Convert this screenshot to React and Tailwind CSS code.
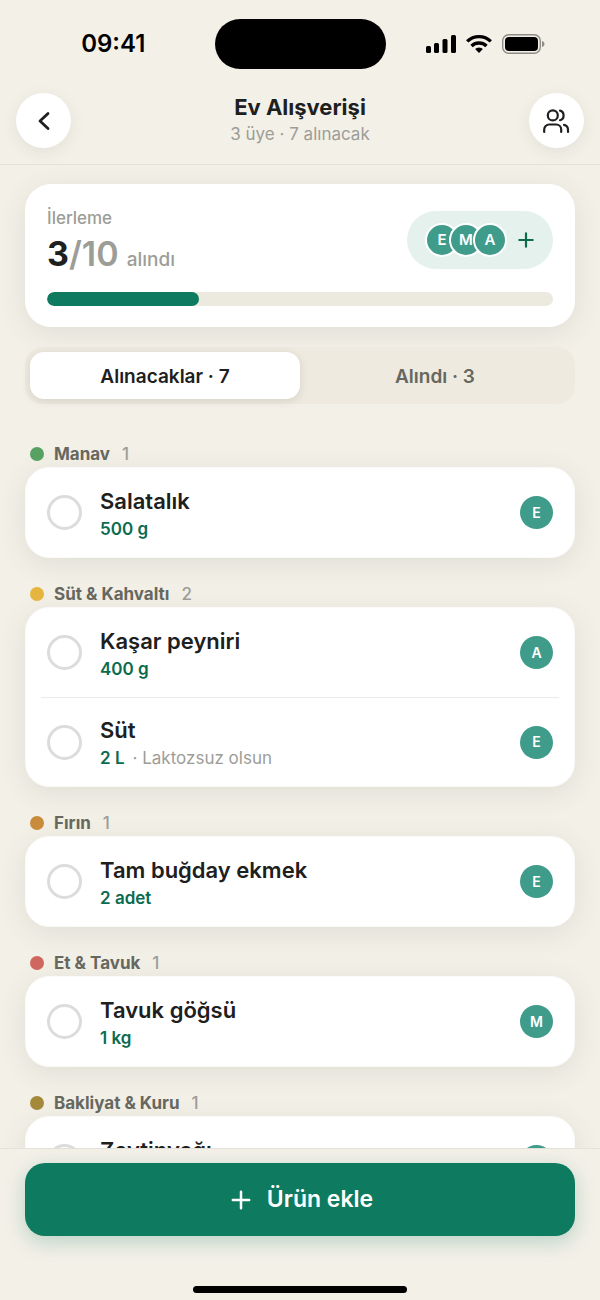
import React, { useState } from 'react';
import { clsx } from 'clsx';

const MEMBERS = ['E', 'M', 'A'];

const TOTAL = 10;
const DONE = 3;

const SECTIONS = [
  {
    name: 'Manav',
    dot: 'bg-[#57a163]',
    items: [{ id: 'salatalik', name: 'Salatalık', qty: '500 g', by: 'E' }],
  },
  {
    name: 'Süt & Kahvaltı',
    dot: 'bg-[#e5b53f]',
    items: [
      { id: 'kasar', name: 'Kaşar peyniri', qty: '400 g', by: 'A' },
      { id: 'sut', name: 'Süt', qty: '2 L', note: 'Laktozsuz olsun', by: 'E' },
    ],
  },
  {
    name: 'Fırın',
    dot: 'bg-[#c98b3c]',
    items: [{ id: 'ekmek', name: 'Tam buğday ekmek', qty: '2 adet', by: 'E' }],
  },
  {
    name: 'Et & Tavuk',
    dot: 'bg-[#d0675f]',
    items: [{ id: 'tavuk', name: 'Tavuk göğsü', qty: '1 kg', by: 'M' }],
  },
  {
    name: 'Bakliyat & Kuru',
    dot: 'bg-[#a5893b]',
    items: [{ id: 'zeytinyagi', name: 'Zeytinyağı', qty: '1 L', by: 'E' }],
  },
];

function StatusBar() {
  return (
    <div className="grid h-[88px] shrink-0 grid-cols-[1fr_171px_1fr] items-center text-black">
      <div className="pl-3 text-center text-2xl font-semibold">09:41</div>
      <div className="h-[50px] rounded-full bg-black" />
      <div className="flex items-center justify-center gap-[10px] pr-[14px]">
        <svg width="30" height="20" viewBox="0 0 30 20" fill="currentColor" aria-hidden="true">
          <rect x="0" y="12" width="5" height="7" rx="1.5" />
          <rect x="8" y="9" width="5" height="10" rx="1.5" />
          <rect x="16.500" y="5" width="5" height="14" rx="1.5" />
          <rect x="25" y="1" width="5" height="18" rx="1.5" />
        </svg>
        <svg width="26" height="20" viewBox="0 0 26 20" fill="none" stroke="currentColor" aria-hidden="true">
          <path d="M1.200 7.400a17 17 0 0 1 23.600 0" strokeWidth="3.400" />
          <path d="M5.500 12a11 11 0 0 1 15 0" strokeWidth="3.400" />
          <path d="M13 19l-3.900-3.900a5.600 5.600 0 0 1 7.800 0z" fill="currentColor" stroke="none" />
        </svg>
        <svg width="43" height="20" viewBox="0 0 43 20" aria-hidden="true">
          <rect x="0.700" y="0.700" width="37.600" height="18.600" rx="6" fill="none" stroke="#8d8c87" strokeWidth="1.400" />
          <rect x="3" y="3" width="33" height="14" rx="4" fill="currentColor" />
          <path d="M40 7c1.600.4 2.500 1.600 2.500 3s-.9 2.600-2.500 3z" fill="#8d8c87" />
        </svg>
      </div>
    </div>
  );
}

function RoundButton({ label, children }) {
  return (
    <button
      aria-label={label}
      className="flex size-[55px] items-center justify-center rounded-full bg-white text-[#1d201d] shadow-[0_4px_16px_rgba(40,50,40,0.08)]"
    >
      {children}
    </button>
  );
}

function Header() {
  return (
    <header className="flex shrink-0 items-center justify-between border-b border-[#e3e1da] px-4 pt-[5px] pb-4">
      <RoundButton label="Geri">
        <svg width="28" height="28" viewBox="0 0 28 28" fill="none" stroke="currentColor" strokeWidth="2.800" strokeLinecap="round" strokeLinejoin="round">
          <path d="M18 6.500l-8 7.500 8 7.500" />
        </svg>
      </RoundButton>
      <div className="text-center">
        <h1 className="text-[22px] leading-[26px] font-bold text-[#1d201d]">Ev Alışverişi</h1>
        <p className="text-[17px] leading-7 text-[#9c9d97]">3 üye · 7 alınacak</p>
      </div>
      <RoundButton label="Üyeler">
        <svg width="28" height="28" viewBox="0 0 28 28" fill="none" stroke="currentColor" strokeWidth="2.200" strokeLinecap="round" strokeLinejoin="round">
          <circle cx="10.800" cy="8.400" r="5" />
          <path d="M2.200 25v-2.500a5 5 0 0 1 5-5h7a5 5 0 0 1 5 5V25" />
          <path d="M18 3.600a5 5 0 0 1 0 9.600" />
          <path d="M22 17.900a5 5 0 0 1 4 4.800V25" />
        </svg>
      </RoundButton>
    </header>
  );
}

function ProgressCard() {
  return (
    <section className="rounded-[26px] bg-white px-[22px] pt-5 pb-[21px] shadow-[0_6px_28px_rgba(60,65,50,0.1)]">
      <div className="flex items-center justify-between">
        <div>
          <div className="text-[17px] leading-7 font-medium text-[#9c9d97]">İlerleme</div>
          <div className="flex items-baseline leading-[44px] text-[#9c9d97]">
            <span className="text-[34px] font-bold text-[#1d201d]">{DONE}</span>
            <span className="text-[34px] font-semibold">/{TOTAL}</span>
            <span className="ml-2 text-[19px] leading-7 font-medium">alındı</span>
          </div>
        </div>
        <button
          aria-label="Üye ekle"
          className="flex h-[58px] items-center rounded-full bg-[#e5f1ec] pr-4 pl-[18px] text-[#0b6b4f]"
        >
          <span className="flex -space-x-2.5">
            {MEMBERS.map((m) => (
              <span
                key={m}
                className="flex size-[34px] items-center justify-center rounded-full border-2 border-white bg-[#3f9c8b] text-[15px] font-semibold text-white"
              >
                {m}
              </span>
            ))}
          </span>
          <svg className="ml-2" width="22" height="22" viewBox="0 0 22 22" fill="none" stroke="currentColor" strokeWidth="2.200" strokeLinecap="round">
            <path d="M11 4.300v13.400M4.300 11h13.400" />
          </svg>
        </button>
      </div>
      <div className="mt-4 h-[14px] overflow-hidden rounded-full bg-[#ece9df]">
        <div className="h-full rounded-full bg-[#0e7a5f]" style={{ width: `${(DONE / TOTAL) * 100}%` }} />
      </div>
    </section>
  );
}

function Tabs({ value, onChange }) {
  const tabs = [
    { id: 'todo', label: 'Alınacaklar · 7' },
    { id: 'done', label: 'Alındı · 3' },
  ];

  return (
    <div role="tablist" className="mt-5 grid grid-cols-2 rounded-[18px] bg-[#eeeadf] p-[5px]">
      {tabs.map((t) => (
        <button
          key={t.id}
          role="tab"
          aria-selected={value === t.id}
          onClick={() => onChange(t.id)}
          className={clsx(
            'h-[47px] rounded-[14px] pt-1 text-[19px] font-semibold',
            value === t.id
              ? 'bg-white text-[#1d201d] shadow-[0_2px_8px_rgba(60,65,50,0.14)]'
              : 'text-[#66675e]'
          )}
        >
          {t.label}
        </button>
      ))}
    </div>
  );
}

function Item({ item, checked, onToggle }) {
  return (
    <li className="mx-[15px] flex h-[89px] items-center border-[#ebebe9] px-[6px] not-first:border-t">
      <input
        id={item.id}
        type="checkbox"
        checked={checked}
        onChange={onToggle}
        className="size-[35px] shrink-0 appearance-none rounded-full border-[3px] border-[#dcdcdc] checked:border-[#0e7a5f] checked:bg-[#0e7a5f]"
      />
      <div className="ml-[18px] min-w-0 flex-1 pt-0.5">
        <label htmlFor={item.id} className="block text-[22px] leading-[30px] font-semibold text-[#1d201d]">
          {item.name}
        </label>
        <div className="text-[17px] leading-[26px] text-[#9c9d97]">
          <span className="font-semibold text-[#0b6b4f]">{item.qty}</span>
          {item.note && <span className="ml-2">· {item.note}</span>}
        </div>
      </div>
      <span className="flex size-[33px] items-center justify-center rounded-full bg-[#3f9c8b] text-sm font-semibold text-white">
        {item.by}
      </span>
    </li>
  );
}

export default function App() {
  const [tab, setTab] = useState('todo');
  const [checked, setChecked] = useState({});

  const toggle = (id) => setChecked((prev) => ({ ...prev, [id]: !prev[id] }));

  return (
    <div className="flex h-screen flex-col bg-[#f3f0e8] font-['Inter','Liberation_Sans',sans-serif]">
      <StatusBar />
      <Header />

      <main className="min-h-0 flex-1 overflow-y-auto px-[25px] pt-[19px] pb-8 [scrollbar-width:none]">
        <ProgressCard />
        <Tabs value={tab} onChange={setTab} />

        <div className="mt-10 flex flex-col gap-[26px]">
          {SECTIONS.map((s) => (
            <section key={s.name}>
              <h2 className="mb-[3px] flex items-center pl-[5px] text-[17px] leading-5 font-bold text-[#66675e]">
                <span className={clsx('mr-[10px] size-[14px] rounded-full', s.dot)} />
                {s.name}
                <span className="ml-3 font-medium text-[#9c9d97]">{s.items.length}</span>
              </h2>
              <ul className="rounded-[24px] border border-[#fbfaf8] bg-white shadow-[0_6px_28px_rgba(60,65,50,0.1)]">
                {s.items.map((item) => (
                  <Item
                    key={item.id}
                    item={item}
                    checked={!!checked[item.id]}
                    onToggle={() => toggle(item.id)}
                  />
                ))}
              </ul>
            </section>
          ))}
        </div>
      </main>

      <footer className="flex shrink-0 flex-col items-center border-t border-[#e3e1da] px-[25px] pt-[14px] pb-[7px]">
        <button className="flex h-[73px] w-full items-center justify-center gap-3 rounded-[20px] bg-[#0e7a5f] text-[23px] font-semibold text-white shadow-[0_6px_20px_rgba(14,122,95,0.25)]">
          <svg width="28" height="28" viewBox="0 0 28 28" fill="none" stroke="currentColor" strokeWidth="2.500" strokeLinecap="round">
            <path d="M14 5.800v16.400M5.800 14h16.400" />
          </svg>
          Ürün ekle
        </button>
        <div className="mt-[50px] h-[7px] w-[214px] rounded-full bg-black" />
      </footer>
    </div>
  );
}
